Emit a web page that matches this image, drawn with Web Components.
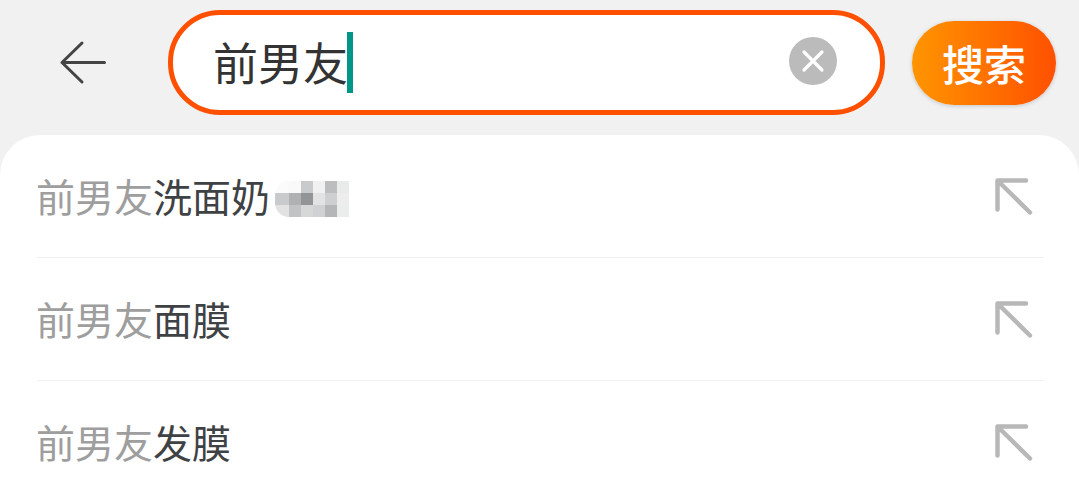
<!DOCTYPE html>
<html lang="zh">
<head>
<meta charset="utf-8">
<title>搜索</title>
<style>
    html, body { margin: 0; height: 100%; overflow: hidden; background: #f1f1f1; }
    body { font-family: "Noto Sans CJK SC", "Noto Sans", sans-serif; }
</style>
</head>
<body>
<search-page>
    <search-bar slot="header" value="前男友"></search-bar>
    <suggest-row match="前男友" rest="洗面奶"><mosaic-patch></mosaic-patch></suggest-row>
    <suggest-row match="前男友" rest="面膜"></suggest-row>
    <suggest-row match="前男友" rest="发膜"></suggest-row>
</search-page>

<script>
/** Page shell: grey header area above a rounded white list card. */
class SearchPage extends HTMLElement {
    constructor() {
        super();
        this.attachShadow({ mode: 'open' }).innerHTML = `
            <style>
                :host { display: block; }
                .card {
                    background: #fff;
                    border-radius: 40px 40px 0 0;
                    padding: 0 35px 0 37px;
                    height: 361px;
                    overflow: hidden;
                }
            </style>
            <slot name="header"></slot>
            <div class="card"><slot></slot></div>
        `;
    }
}

/** Back arrow, outlined search field with caret and clear button, search button. */
class SearchBar extends HTMLElement {
    constructor() {
        super();
        this.attachShadow({ mode: 'open' });
    }

    connectedCallback() {
        const value = this.getAttribute('value') || '';
        this.shadowRoot.innerHTML = `
            <style>
                :host {
                    display: flex;
                    align-items: center;
                    height: 135px;
                    box-sizing: border-box;
                    padding: 0 23px 10px 57px;
                }
                .back { width: 50px; height: 46px; flex: none; margin-right: 61px; }
                .field {
                    flex: none;
                    box-sizing: border-box;
                    width: 717px;
                    height: 105px;
                    border: 5px solid #ff5000;
                    border-radius: 52px;
                    background: #fff;
                    display: flex;
                    align-items: center;
                    padding: 0 43px 0 40px;
                    margin-right: 27px;
                }
                .value { font-size: 45px; line-height: 61px; color: #333; margin-bottom: 2px; }
                .caret { width: 6px; height: 61px; background: #009688; margin: 0 0 1px -1px; }
                .clear { width: 48px; height: 48px; margin: 0 0 3px auto; flex: none; }
                .go {
                    flex: none;
                    width: 144px;
                    height: 84px;
                    border-radius: 42px;
                    background: linear-gradient(90deg, #ff9500, #ff5000);
                    box-shadow: 0 1px 4px rgba(0,0,0,.18);
                    color: #fff;
                    font-size: 42px;
                    font-weight: 500;
                    display: flex;
                    align-items: center;
                    justify-content: center;
                }
            </style>
            <svg class="back" viewBox="0 0 50 46" fill="none" stroke="#444" stroke-width="3" stroke-linecap="round" stroke-linejoin="round">
                <path d="M47.5 22.5H5M25 3L5 22.5L25 42"/>
            </svg>
            <div class="field">
                <span class="value">${value}</span>
                <span class="caret"></span>
                <svg class="clear" viewBox="0 0 48 48">
                    <circle cx="24" cy="24" r="24" fill="#bbb"/>
                    <path d="M15 15L33 33M33 15L15 33" stroke="#fff" stroke-width="3.2" stroke-linecap="round"/>
                </svg>
            </div>
            <div class="go">搜索</div>
        `;
    }
}

/** One suggestion: matched prefix in grey, remainder in dark, fill-in arrow on the right. */
class SuggestRow extends HTMLElement {
    constructor() {
        super();
        this.attachShadow({ mode: 'open' });
    }

    connectedCallback() {
        this.shadowRoot.innerHTML = `
            <style>
                :host {
                    display: flex;
                    align-items: center;
                    box-sizing: border-box;
                    height: 123px;
                    border-bottom: 1px solid #f0f0f0;
                    font-size: 39px;
                    color: #3f4244;
                }
                .match { color: #9e9e9e; }
                .text { white-space: nowrap; margin: 0 0 3px -1px; }
                .fill { width: 40px; height: 40px; margin-left: auto; margin-right: 10px; flex: none; }
            </style>
            <span class="text"><span class="match">${this.getAttribute('match')}</span>${this.getAttribute('rest')}</span>
            <slot></slot>
            <svg class="fill" viewBox="0 0 40 40" fill="none" stroke="#b8b8b8" stroke-width="4.5" stroke-linecap="round" stroke-linejoin="round">
                <path d="M3.5 33.5V4.5H32M4 5L36 36.5"/>
            </svg>
        `;
    }
}

// Pixelated blur covering part of the first suggestion. Greys read off the reference.
const MOSAIC = [
    '#fbfbfb', '#f9f9f9', '#c9cacb', '#f1f1f1', '#bcbdbe', '#e9eaea',
    '#c9cacb', '#b0b1b2', '#929496', '#e3e3e4', '#cecfd0', '#ededee',
    '#e2e2e3', '#c2c3c4', '#d6d7d7', '#d0d1d2', '#b5b6b7', '#ebecec',
];

class MosaicPatch extends HTMLElement {
    constructor() {
        super();
        this.attachShadow({ mode: 'open' }).innerHTML = `
            <style>
                :host {
                    display: grid;
                    grid-template-columns: 14px repeat(5, 12px);
                    grid-auto-rows: 12px;
                    margin-left: 5px;
                    margin-top: 6px;
                    border-radius: 14px 0 0 14px;
                    overflow: hidden;
                }
            </style>
            ${MOSAIC.map(c => `<i style="background:${c}"></i>`).join('')}
        `;
    }
}

customElements.define('search-page', SearchPage);
customElements.define('search-bar', SearchBar);
customElements.define('suggest-row', SuggestRow);
customElements.define('mosaic-patch', MosaicPatch);
</script>
</body>
</html>
